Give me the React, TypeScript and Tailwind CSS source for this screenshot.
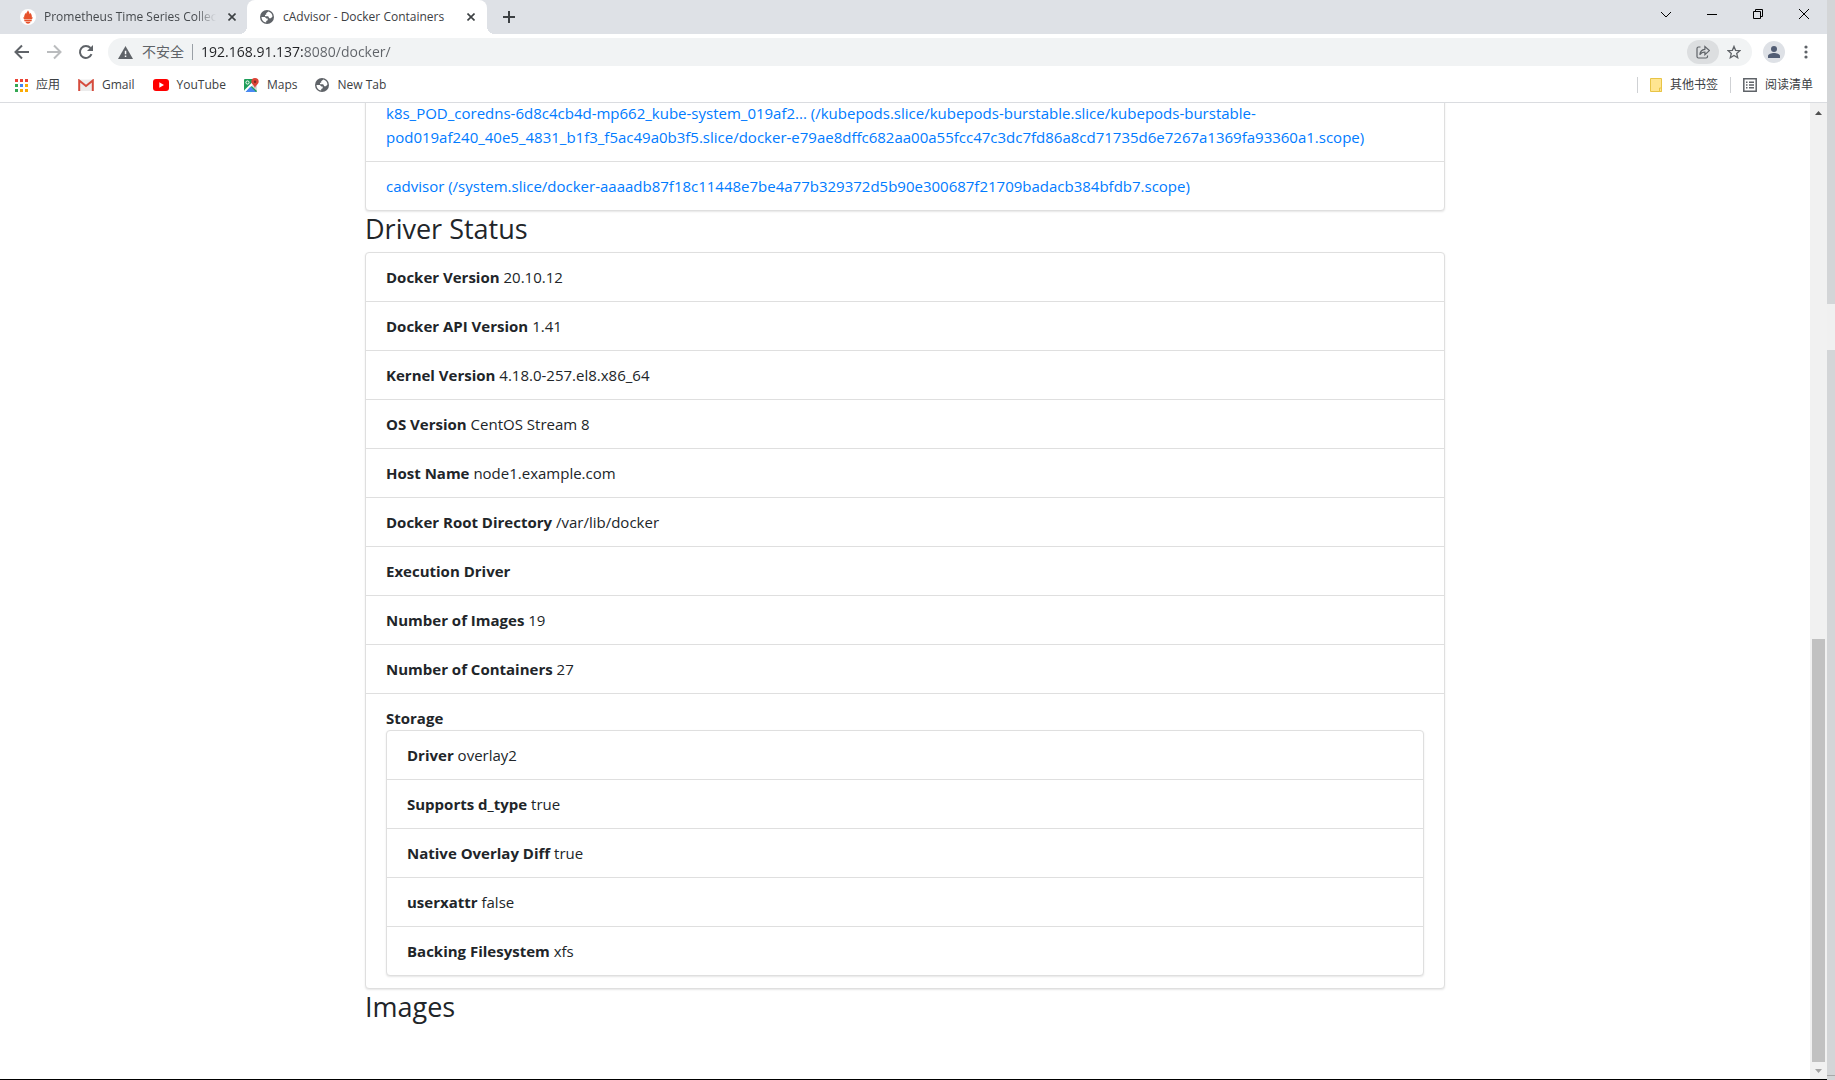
import type { ReactNode } from "react";

const driverStatus = [
  { label: "Docker Version", value: "20.10.12" },
  { label: "Docker API Version", value: "1.41" },
  { label: "Kernel Version", value: "4.18.0-257.el8.x86_64" },
  { label: "OS Version", value: "CentOS Stream 8" },
  { label: "Host Name", value: "node1.example.com" },
  { label: "Docker Root Directory", value: "/var/lib/docker" },
  { label: "Execution Driver", value: "" },
  { label: "Number of Images", value: "19" },
  { label: "Number of Containers", value: "27" },
];

const storage = [
  { label: "Driver", value: "overlay2" },
  { label: "Supports d_type", value: "true" },
  { label: "Native Overlay Diff", value: "true" },
  { label: "userxattr", value: "false" },
  { label: "Backing Filesystem", value: "xfs" },
];

const containers = [
  "k8s_POD_coredns-6d8c4cb4d-mp662_kube-system_019af2... (/kubepods.slice/kubepods-burstable.slice/kubepods-burstable-pod019af240_40e5_4831_b1f3_f5ac49a0b3f5.slice/docker-e79ae8dffc682aa00a55fcc47c3dc7fd86a8cd71735d6e7267a1369fa93360a1.scope)",
  "cadvisor (/system.slice/docker-aaaadb87f18c11448e7be4a77b329372d5b90e300687f21709badacb384bfdb7.scope)",
];

function Globe() {
  return (
    <svg className="size-[14px] shrink-0" viewBox="0 0 14 14">
      <circle cx="7" cy="7" r="7" fill="#5f6368" />
      <path
        d="M8.300 1.500L6.200 3.300v1.500H5v1.400h3.200l1 2h1.600l1.700-1.700c-.1-2.400-1.800-4.300-4.200-5zM1.500 7h3.400l1.500 1.400h1.300v1.900l-1.500.600v1.500C3.600 12.300 1.500 10 1.500 7z"
        fill="#fff"
      />
    </svg>
  );
}

function CloseIcon() {
  return (
    <svg className="size-2" viewBox="0 0 8 8" stroke="#3c4043" strokeWidth="1.6">
      <path d="M.5.5l7 7M7.5.5l-7 7" />
    </svg>
  );
}

function TabStrip() {
  return (
    <div className="flex h-[34px] items-stretch bg-[#dee1e6]">
      <div className="flex w-[247px] items-center pr-[7px] pl-5">
        <svg className="size-4 shrink-0" viewBox="0 0 16 16">
          <circle cx="8" cy="8" r="8" fill="#fff" />
          <path
            d="M8 1.200c.6 1.500 1.700 2.200 1.600 4 .5-.4.8-.9.9-1.500 1 1.800 1.700 3.100 1.300 4.900l1-.4c-.2 1.200-.6 1.700-1.100 2.200H4.300c-.5-.5-.9-1-1.100-2.200l1 .4C3.800 6.800 4.900 5.700 5.400 3.700c.2.500.3 1 .7 1.400C6.100 3.400 7.500 2.800 8 1.200zM4.300 11h7.400v1.200H4.300zM5.300 12.700h5.400c-.5 1.300-1.600 2-2.700 2s-2.200-.7-2.700-2z"
            fill="#e6522c"
          />
        </svg>
        <span className="ml-2 min-w-0 flex-1 overflow-hidden mask-r-from-88% text-xs whitespace-nowrap text-[#45494d]">
          Prometheus Time Series Collec
        </span>
        <button aria-label="Close tab" className="ml-2 p-1">
          <CloseIcon />
        </button>
      </div>
      <div className="relative flex w-[240px] items-center rounded-t-lg bg-white pr-2 pl-[13px]">
        <span className="absolute bottom-0 -left-2 size-2 bg-[radial-gradient(circle_at_0_0,#dee1e6_8px,#fff_8px)]" />
        <span className="absolute -right-2 bottom-0 size-2 bg-[radial-gradient(circle_at_100%_0,#dee1e6_8px,#fff_8px)]" />
        <Globe />
        <span className="ml-[9px] flex-1 text-xs whitespace-nowrap text-[#3c4043]">cAdvisor - Docker Containers</span>
        <button aria-label="Close tab" className="p-1">
          <CloseIcon />
        </button>
      </div>
      <button aria-label="New tab" className="ml-4">
        <svg className="size-3" viewBox="0 0 12 12" stroke="#3c4043" strokeWidth="2">
          <path d="M6 0v12M0 6h12" />
        </svg>
      </button>
      <div className="ml-auto flex items-center pb-[6px] text-black">
        <button aria-label="Search tabs" className="flex w-[46px] justify-center">
          <svg className="size-3" viewBox="0 0 12 12" fill="none" stroke="currentColor">
            <path d="M1 4l5 5 5-5" />
          </svg>
        </button>
        <button aria-label="Minimize" className="flex w-[46px] justify-center">
          <svg className="size-3" viewBox="0 0 12 12" fill="none" stroke="currentColor">
            <path d="M1 6.500h10" />
          </svg>
        </button>
        <button aria-label="Restore" className="flex w-[46px] justify-center">
          <svg className="size-3" viewBox="0 0 12 12" fill="none" stroke="currentColor">
            <path d="M1.500 3.500h7v7h-7zM3.500 3.500v-2h7v7h-2" />
          </svg>
        </button>
        <button aria-label="Close" className="flex w-[46px] justify-center">
          <svg className="size-3" viewBox="0 0 12 12" fill="none" stroke="currentColor">
            <path d="M1 1l10 10M11 1L1 11" />
          </svg>
        </button>
      </div>
    </div>
  );
}

function Toolbar() {
  return (
    <div className="flex h-9 items-center pr-3 pl-[14px]">
      <div className="flex w-[94px] items-center gap-4">
        <button aria-label="Back">
          <svg className="size-4" viewBox="0 0 16 16" fill="none" stroke="#5f6368" strokeWidth="2">
            <path d="M15 8H2.500M8 1.500L1.500 8 8 14.500" />
          </svg>
        </button>
        <button aria-label="Forward">
          <svg className="size-4" viewBox="0 0 16 16" fill="none" stroke="#babcbe" strokeWidth="2">
            <path d="M1 8h12.500M8 1.500L14.500 8 8 14.500" />
          </svg>
        </button>
        <button aria-label="Reload">
          <svg className="size-4" viewBox="0 0 16 16" fill="none" stroke="#5f6368" strokeWidth="2">
            <path d="M13.500 10.200A6 6 0 1 1 12.500 4" />
            <path d="M15 1v6H9z" fill="#5f6368" stroke="none" />
          </svg>
        </button>
      </div>
      <div className="flex h-7 flex-1 items-center rounded-full bg-[#f1f3f4] pl-[10px]">
        <svg className="h-[13px] w-[15px]" viewBox="0 0 15 13">
          <path d="M7.500 0L15 13H0z" fill="#5f6368" />
          <path d="M6.800 4.800h1.500v3.400H6.800zM6.800 9.500h1.500V11H6.800z" fill="#fff" />
        </svg>
        <span className="ml-[9px] text-sm text-[#5f6368]">不安全</span>
        <span className="ml-2 h-4 w-px bg-[#9aa0a6]" />
        {/* host is darker than the port and path */}
        <input
          aria-label="Address"
          type="text"
          defaultValue="192.168.91.137:8080/docker/"
          className="ml-2 min-w-0 flex-1 bg-[linear-gradient(to_right,#202124_102px,#5f6368_102px)] bg-clip-text text-sm text-transparent outline-none"
        />
        <button aria-label="Share" className="flex h-6 w-8 items-center justify-center rounded-full bg-[#dcdee0]">
          <svg className="size-[14px]" viewBox="0 0 14 14" fill="none" stroke="#5f6368" strokeWidth="1.200">
            <path d="M4.500 2H2.500A1.500 1.500 0 0 0 1 3.500v8A1.500 1.500 0 0 0 2.500 13h7.500a1.500 1.500 0 0 0 1.500-1.500V10.500" />
            <path d="M3.800 9.800C4.100 6.400 6 4.500 8.900 4.300V1.600L13.400 5.600 8.900 9.600V7C6.600 7 5 7.800 3.800 9.800z" />
          </svg>
        </button>
        <button aria-label="Bookmark" className="mr-[11px] ml-2">
          <svg className="size-[14px]" viewBox="0 0 14 14" fill="none" stroke="#5f6368" strokeWidth="1.300">
            <path d="M7 1.400l1.600 3.900 4.400.3-3.300 2.800 1 4.300L7 10.400l-3.700 2.300 1-4.300L1 5.600l4.400-.3z" />
          </svg>
        </button>
      </div>
      <button aria-label="Profile" className="ml-[11px]">
        <svg className="size-[22px]" viewBox="0 0 22 22">
          <circle cx="11" cy="11" r="11" fill="#dee1e6" />
          <circle cx="11" cy="8" r="3" fill="#525d74" />
          <path d="M5 17v-2c0-2 3.500-3 6-3s6 1 6 3v2z" fill="#525d74" />
        </svg>
      </button>
      <button aria-label="Menu" className="ml-3 px-[7px]">
        <svg className="h-[14px] w-1" viewBox="0 0 4 14" fill="#5f6368">
          <circle cx="2" cy="2" r="1.600" />
          <circle cx="2" cy="7" r="1.600" />
          <circle cx="2" cy="12" r="1.600" />
        </svg>
      </button>
    </div>
  );
}

function Bookmark({ icon, children }: { icon: ReactNode; children: ReactNode }) {
  return (
    <a href="#" className="flex items-center gap-2 whitespace-nowrap">
      {icon}
      {children}
    </a>
  );
}

function BookmarksBar() {
  return (
    <nav className="flex h-[33px] items-center justify-between border-b border-[#dadce0] pb-[2px] pl-[15px] text-xs text-[#3c4043]">
      <div className="flex items-center gap-[18px]">
        <Bookmark
          icon={
            <svg className="size-[13px]" viewBox="0 0 13 13">
              <path d="M0 0h3v3H0zM5 0h3v3H5zM10 0h3v3h-3z" fill="#ea4335" />
              <path d="M0 5h3v3H0zM0 10h3v3H0z" fill="#34a853" />
              <path d="M5 5h3v3H5z" fill="#4285f4" />
              <path d="M10 5h3v3h-3zM5 10h3v3H5zM10 10h3v3h-3z" fill="#fbab05" />
            </svg>
          }
        >
          应用
        </Bookmark>
        <Bookmark
          icon={
            <svg className="h-3 w-4" viewBox="0 0 16 12">
              <path d="M1 .500h14V12H1z" fill="#ececec" />
              <path d="M1.200 12V1.500L8 7l6.800-5.500V12" fill="none" stroke="#d54b3d" strokeWidth="2" />
            </svg>
          }
        >
          Gmail
        </Bookmark>
        <Bookmark
          icon={
            <svg className="h-3 w-4" viewBox="0 0 16 12">
              <rect width="16" height="12" rx="3" fill="#f00" />
              <path d="M6.300 3.300v5.400L11 6z" fill="#fff" />
            </svg>
          }
        >
          YouTube
        </Bookmark>
        <Bookmark
          icon={
            <svg className="size-[15px]" viewBox="0 0 15 15">
              <rect y="1" width="13" height="13" rx="1" fill="#1e9e5a" />
              <path d="M7 7.500L13 13V4H9z" fill="#dcdcdc" />
              <path d="M0 12.500L10 2.500l1.500 1.500L2 14H0z" fill="#fff" />
              <path d="M1.500 14l5-5.500 5.500 5.500z" fill="#4a89f3" />
              <circle cx="3.500" cy="4.500" r="1.600" fill="none" stroke="#fff" />
              <path
                d="M11 0a3.700 3.700 0 0 1 3.700 3.700C14.700 6 11.500 7 11 10.500 10.500 7 7.300 6 7.300 3.700A3.700 3.700 0 0 1 11 0z"
                fill="#dc4437"
              />
              <circle cx="11" cy="3.700" r="1.200" fill="#7a2a22" />
            </svg>
          }
        >
          Maps
        </Bookmark>
        <Bookmark icon={<Globe />}>New Tab</Bookmark>
      </div>
      <div className="flex items-center gap-3 pr-[14px]">
        <span className="h-4 w-px bg-[#cfd1d4]" />
        <Bookmark
          icon={
            <svg className="h-[14px] w-3" viewBox="0 0 12 14" stroke="#e8c446">
              <path d="M.5.500h11v13H.500z" fill="#ffe591" />
              <path d="M9.500 10h2v3.500h-2z" fill="#ffe591" />
            </svg>
          }
        >
          其他书签
        </Bookmark>
        <span className="h-4 w-px bg-[#cfd1d4]" />
        <Bookmark
          icon={
            <svg className="size-[14px]" viewBox="0 0 14 14" fill="none" stroke="#5f6368" strokeWidth="1.500">
              <path d="M.8.800h12.400v12.400H.8z" />
              <path d="M3 4.300h1.500M6 4.300h5M3 7h1.500M6 7h5M3 9.700h1.500M6 9.700h5" />
            </svg>
          }
        >
          阅读清单
        </Bookmark>
      </div>
    </nav>
  );
}

function ListGroup({ children }: { children: ReactNode }) {
  return (
    <ul className="divide-y divide-[#dfdfdf] rounded border border-[#dfdfdf] bg-white shadow-[0_1px_2px_rgba(0,0,0,0.1)]">
      {children}
    </ul>
  );
}

function InfoRow({ label, value }: { label: string; value: string }) {
  return (
    <li className="px-5 py-3">
      <span className="font-bold">{label}</span> {value}
    </li>
  );
}

function Heading({ children }: { children: ReactNode }) {
  return <h3 className="pb-[6px] text-[27px] leading-[35px] font-medium">{children}</h3>;
}

function Scrollbar() {
  return (
    <div className="flex w-[17px] flex-col items-center bg-[#f1f1f1] pt-[6px] pb-1">
      <svg className="h-2 w-[7px]" viewBox="0 0 7 8">
        <path d="M0 6l3.500-4L7 6z" fill="#505050" />
      </svg>
      <div className="flex-[521]" />
      <div className="w-[13px] flex-[423] bg-[#c1c1c1]" />
      <svg className="mt-[5px] h-2 w-[7px]" viewBox="0 0 7 8">
        <path d="M0 2l3.500 4L7 2z" fill="#a3a3a3" />
      </svg>
    </div>
  );
}

export default function App() {
  return (
    <div className="flex h-screen overflow-hidden bg-white font-['Open_Sans','Noto_Sans_CJK_SC',sans-serif]">
      <div className="flex min-w-0 flex-1 flex-col border-b border-black">
        <TabStrip />
        <Toolbar />
        <BookmarksBar />
        <div className="flex min-h-0 flex-1">
          <main className="min-w-0 flex-1 overflow-hidden text-[15px] leading-6 text-[#212529]">
            <div className="mx-auto -mt-[15px] max-w-[1110px] px-[15px]">
              <ListGroup>
                {containers.map((name) => (
                  <li key={name} className="px-5 py-3">
                    <a href="#" className="text-[#007bff]">
                      {name}
                    </a>
                  </li>
                ))}
              </ListGroup>
              <Heading>Driver Status</Heading>
              <ListGroup>
                {driverStatus.map((row) => (
                  <InfoRow key={row.label} {...row} />
                ))}
                <li className="px-5 py-3">
                  <span className="font-bold">Storage</span>
                  <ListGroup>
                    {storage.map((row) => (
                      <InfoRow key={row.label} {...row} />
                    ))}
                  </ListGroup>
                </li>
              </ListGroup>
              <Heading>Images</Heading>
            </div>
          </main>
          <Scrollbar />
        </div>
      </div>
      {/* edge of the window behind */}
      <div className="flex w-2 flex-col bg-[#d3d5d7]">
        <div className="flex-[304]" />
        <div className="flex-[46] bg-[#f0f0f0]" />
        <div className="flex-[725]" />
        <div className="h-[5px] border-t border-[#a8a8a8]" />
      </div>
    </div>
  );
}
